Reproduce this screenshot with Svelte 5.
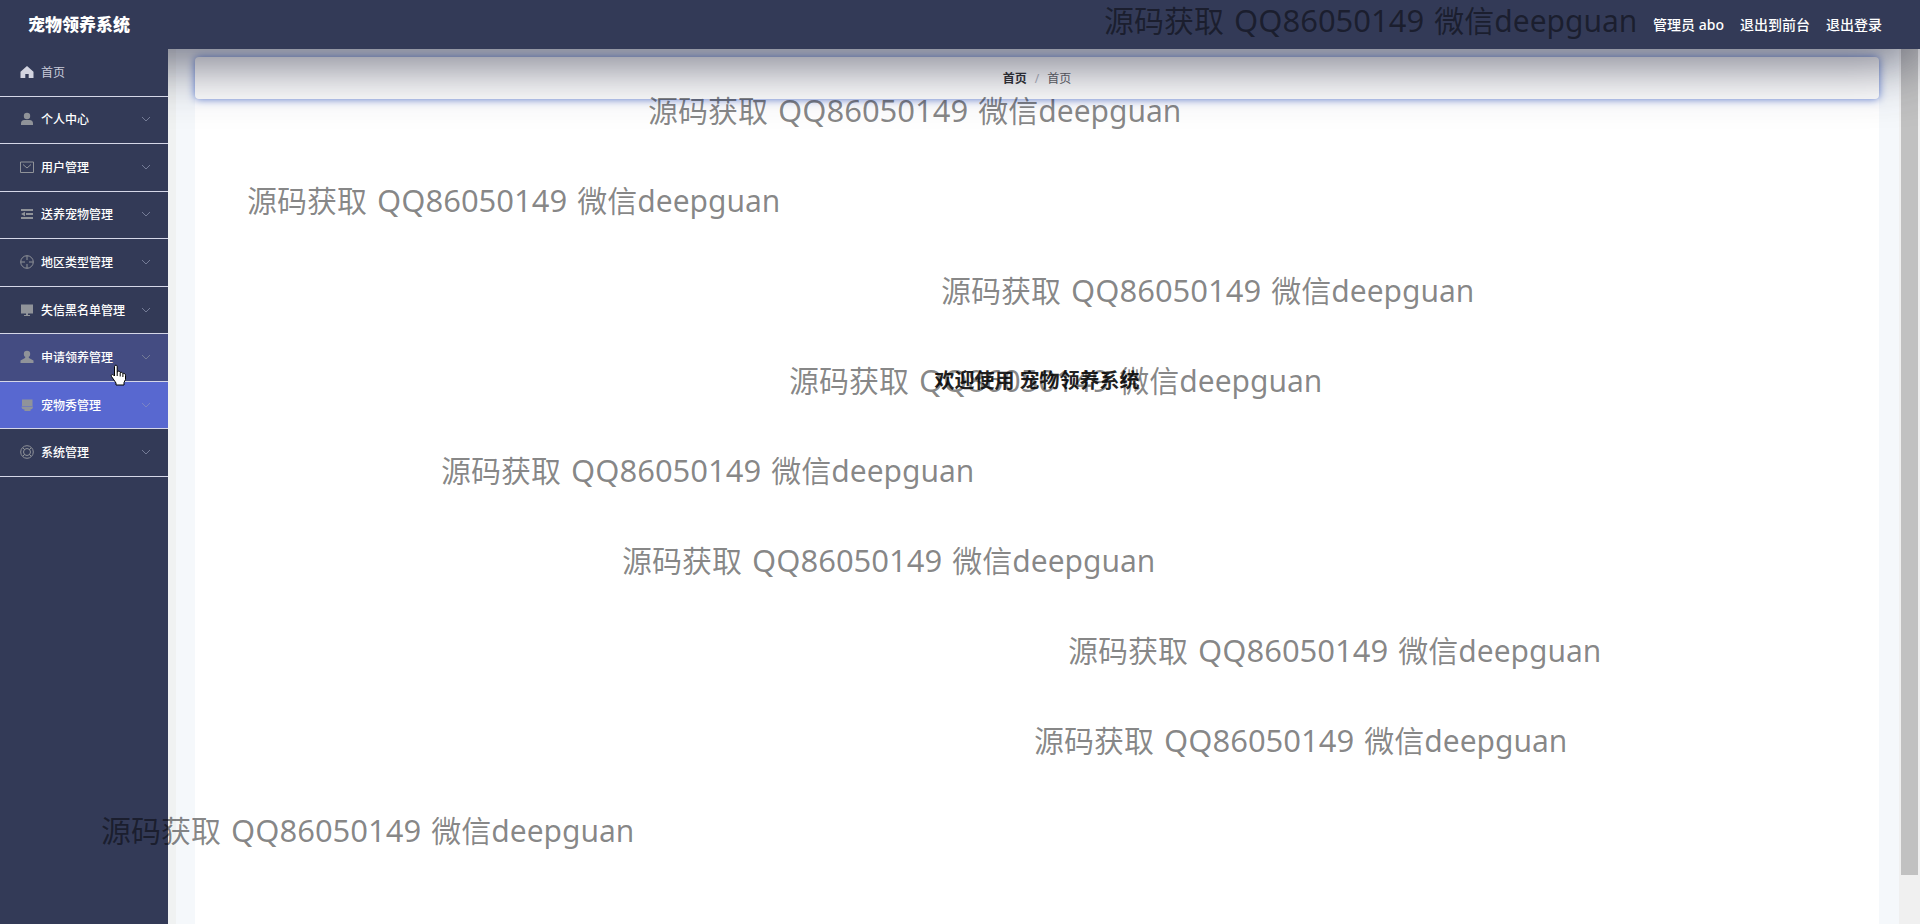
<script lang="ts">
	type MenuItem = { name: string; icon: string; state?: string };

	const menus: MenuItem[] = [
		{ name: '个人中心', icon: 'user' },
		{ name: '用户管理', icon: 'message' },
		{ name: '送养宠物管理', icon: 'fold' },
		{ name: '地区类型管理', icon: 'aim' },
		{ name: '失信黑名单管理', icon: 'platform' },
		{ name: '申请领养管理', icon: 'custom', state: 'hover' },
		{ name: '宠物秀管理', icon: 'help', state: 'active' },
		{ name: '系统管理', icon: 'ring' }
	];

	// left edge of each watermark line
	const offsets = [1104, 648, 247, 941, 789, 441, 622, 1068, 1034, 101];
</script>

<div class="page">
	<header class="navbar">
		<h1>宠物领养系统</h1>
		<div class="account">
			<span>管理员 abo</span>
			<button type="button">退出到前台</button>
			<button type="button">退出登录</button>
		</div>
	</header>

	<div class="body">
		<aside class="sidebar">
			<nav class="menu">
				<a class="item home" href="#home">
					<svg class="icon" viewBox="0 0 14 14">
						<path d="M7 1 .5 6.800V13h4.800V9h3.400v4h4.800V6.800Z" />
					</svg>
					<span>首页</span>
				</a>
				{#each menus as menu}
					<button
						type="button"
						class="item"
						class:hover={menu.state === 'hover'}
						class:active={menu.state === 'active'}
					>
						<svg class="icon" viewBox="0 0 14 14">
							{#if menu.icon === 'user'}
								<circle cx="7" cy="4" r="3.200" />
								<path d="M1 13v-1.500A3.500 3.500 0 0 1 4.500 8h5A3.500 3.500 0 0 1 13 11.500V13Z" />
							{:else if menu.icon === 'message'}
								<path class="line" d="M.5 2h13v10.500H.5ZM3 4.500l4 3.500 4-3.500" />
							{:else if menu.icon === 'fold'}
								<path d="M1 2h12v2H1ZM6 6h7v2H6ZM1 10h12v2H1ZM1 7l4-2.200v4.400Z" />
							{:else if menu.icon === 'aim'}
								<circle class="line" cx="7" cy="7" r="6.300" />
								<path class="line" d="M7 1v4M7 9v4M1 7h4M9 7h4" />
							{:else if menu.icon === 'platform'}
								<path d="M1 1.500h12v9H1ZM6 10.500h2V12h2v1H4v-1h2Z" />
							{:else if menu.icon === 'custom'}
								<circle cx="7" cy="4" r="3.200" />
								<path d="M5.500 6.500h3L9 8l4.500 2.500V13H.5v-2.500L5 8Z" />
							{:else if menu.icon === 'help'}
								<path d="M2 1.500h10.500v6.500H2ZM1.500 8.500h11.500c0 2-1 3-2.500 3v1.500h-6v-1.500c-2 0-3-1-3-3Z" />
							{:else}
								<circle class="line" cx="7" cy="7" r="6.300" />
								<circle class="line" cx="7" cy="7" r="3.500" />
								<path class="line" d="m3 3 1.700 1.700M11 3 9.300 4.700M3 11l1.700-1.700M11 11 9.300 9.300" />
							{/if}
						</svg>
						<span>{menu.name}</span>
						<svg class="arrow" viewBox="0 0 10 6"><path d="m1 1 4 4 4-4" /></svg>
					</button>
				{/each}
			</nav>
		</aside>

		<main class="content">
			<nav class="breadcrumb" aria-label="breadcrumb">
				<a href="#home">首页</a>
				<span class="separator">/</span>
				<span>首页</span>
			</nav>
			<section class="welcome">
				<h2>欢迎使用 宠物领养系统</h2>
			</section>
		</main>

		<div class="scrollbar"><div class="thumb"></div></div>
	</div>

	<div class="watermarks" aria-hidden="true">
		{#each offsets as offset}
			<div class="mark" style="margin-left: {offset}px">
				<span>源码获取</span>
				<span class="qq">QQ86050149</span>
				<span>微信deepguan</span>
			</div>
		{/each}
	</div>

	<svg class="cursor" viewBox="0 0 18 22">
		<path
			d="M5 1.500c1.200-.8 2.200 0 2.200 1.200V8l1-.8c1 0 1.800.3 2 1.300 1-.5 2.300 0 2.500 1 1.500-.5 2.800.3 2.800 1.800v4.200l-1.500 3V21H6v-2l-4.500-6.500c-.8-1.500.7-2.500 2-1.500L4.500 12V2.500Z"
		/>
		<path class="fingers" d="M7.200 8v4M10.200 9v3.500M12.900 10v3" />
	</svg>
</div>

<style>
	:global(body) {
		margin: 0;
	}

	.page {
		position: relative;
		min-height: 100vh;
		display: flex;
		flex-direction: column;
		overflow: hidden;
		font-family: 'Noto Sans', 'Noto Sans CJK SC', sans-serif;
		font-size: 12px;
		color: #303133;
	}

	button {
		padding: 0;
		border: none;
		background: none;
		font: inherit;
		color: inherit;
		cursor: pointer;
	}

	a {
		color: inherit;
		text-decoration: none;
	}

	.navbar {
		position: relative;
		z-index: 1;
		box-sizing: border-box;
		height: 49px;
		padding: 0 38px 2px 28px;
		display: flex;
		align-items: center;
		justify-content: space-between;
		background: #333a57;
		box-shadow: 0 8px 60px rgba(26, 28, 52, 0.82);
		color: #fff;
	}

	.navbar h1 {
		margin: 0;
		font-size: 17px;
		font-weight: 900;
	}

	.account {
		display: flex;
		gap: 16px;
		font-size: 14px;
		font-weight: 500;
	}

	.body {
		flex: 1;
		display: flex;
	}

	.sidebar {
		position: relative;
		z-index: 2;
		flex: none;
		width: 168px;
		background: #333a57;
	}

	.menu {
		height: 428px;
		display: grid;
		grid-auto-rows: 1fr;
	}

	.item {
		box-sizing: border-box;
		display: flex;
		align-items: center;
		gap: 7px;
		padding: 0 17px 1px 20px;
		border-bottom: 1px solid #d5d7e8;
		color: #fff;
		font-weight: 500;
	}

	.item.home {
		color: #c9cbda;
		font-weight: 400;
	}

	.item.hover {
		background: #444c82;
	}

	.item.active {
		background: #5868d0;
	}

	.icon {
		width: 14px;
		height: 14px;
		fill: #909399;
	}

	.home .icon {
		fill: #d3d4e0;
	}

	.icon .line {
		fill: none;
		stroke: #909399;
	}

	.arrow {
		width: 10px;
		height: 6px;
		margin-left: auto;
		fill: none;
		stroke: #747b96;
	}

	.active .arrow {
		stroke: #7b84c4;
	}

	.content {
		flex: 1;
		display: flex;
		flex-direction: column;
		padding: 8px 20px 0 19px;
		border-left: 8px solid #f0f2f2;
		background: #f5f8fb;
	}

	.breadcrumb {
		position: relative;
		height: 42px;
		display: flex;
		align-items: center;
		justify-content: center;
		gap: 8px;
		border-radius: 4px;
		background: #fff;
		box-shadow: 0 0 8px #5f7fd8;
		color: #606266;
	}

	.breadcrumb a {
		color: #303133;
		font-weight: 700;
	}

	.separator {
		color: #b0b4c0;
	}

	.welcome {
		flex: 1;
		padding-top: 267px;
		background: #fff;
		text-align: center;
	}

	.welcome h2 {
		margin: 0;
		font-size: 20px;
		line-height: 30px;
		color: #222;
	}

	.scrollbar {
		flex: none;
		width: 17px;
		padding: 0 2px;
		background: #f0f0f0;
	}

	.thumb {
		height: calc(100% - 49px);
		background: #c1c1c1;
	}

	.watermarks {
		position: absolute;
		inset: 0;
		z-index: 3;
		font-size: 30px;
		line-height: 40px;
		white-space: nowrap;
		color: rgba(0, 0, 0, 0.48);
		pointer-events: none;
	}

	.mark {
		height: 90px;
		display: flex;
		align-items: baseline;
		gap: 10px;
	}

	.qq {
		font-size: 31px;
	}

	.cursor {
		position: absolute;
		z-index: 4;
		left: 110px;
		top: 364px;
		width: 18px;
		height: 22px;
		fill: #fff;
		stroke: #000;
		pointer-events: none;
	}

	.cursor .fingers {
		fill: none;
	}
</style>
